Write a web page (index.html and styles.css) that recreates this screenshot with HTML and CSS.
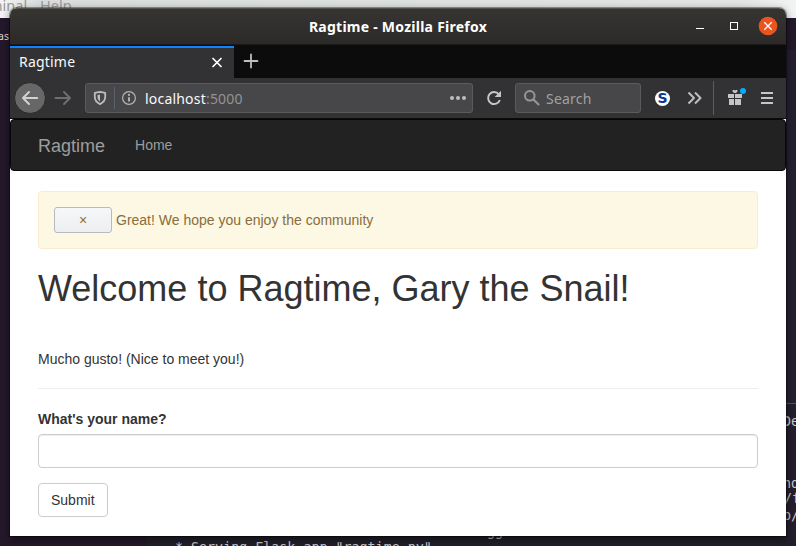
FILE: index.html
```html
<!DOCTYPE html>
<html lang="en">
<head>
<meta charset="utf-8">
<title>Ragtime</title>
<link rel="stylesheet" href="styles.css">
</head>
<body>
<div class="desktop">
  <div class="panel">
    <span class="bg-text menu-minal">minal</span>
    <span class="bg-text menu-help">Help</span>
  </div>
  <div class="terminal-right"></div>
  <div class="terminal-bottom"></div>
  <span class="bg-text term-as">as</span>
  <span class="bg-text mono de">De</span>
  <span class="bg-text mono nc">nd</span>
  <span class="bg-text mono sf">/f</span>
  <span class="bg-text mono pp">p/</span>
  <span class="bg-text mono gg">gg</span>
  <span class="bg-text mono serving">* Serving Flask app "ragtime.py"</span>

  <div class="window">
    <header class="titlebar">
      <span class="title">Ragtime - Mozilla Firefox</span>
      <div class="controls">
        <svg width="12" height="20" viewBox="0 0 12 20"><path d="M2 12.5h8" stroke="#fff"/></svg>
        <svg width="12" height="20" viewBox="0 0 12 20"><rect x="2.5" y="6.5" width="7" height="7" fill="none" stroke="#fff"/></svg>
        <svg width="20" height="20" viewBox="0 0 20 20"><circle cx="10" cy="10" r="9.3" fill="#e95420"/><path d="M6.3 6.3l7.4 7.4M13.7 6.3l-7.4 7.4" stroke="#fff" stroke-width="1.3"/></svg>
      </div>
    </header>
    <div class="tabs">
      <div class="tab">
        <span class="tab-name">Ragtime</span>
        <svg width="12" height="12" viewBox="0 0 12 12"><path d="M2 1.500l8 8M10 1.500l-8 8" stroke="#fff" stroke-width="1.7" stroke-linecap="round"/></svg>
      </div>
      <svg class="new-tab" width="16" height="16" viewBox="0 0 16 16"><path d="M8 1.5v13M1.5 8h13" stroke="#bebebf" stroke-width="1.8" stroke-linecap="round"/></svg>
    </div>
    <div class="toolbar">
      <div class="back">
        <svg width="18" height="16" viewBox="0 0 18 16"><path d="M16.2 8H2M8 2L2 8l6 6" fill="none" stroke="#d1d1d1" stroke-width="2" stroke-linecap="round" stroke-linejoin="round"/></svg>
      </div>
      <svg class="forward" width="18" height="16" viewBox="0 0 18 16"><path d="M1.5 8H16M10 2l6 6-6 6" fill="none" stroke="#6e6e70" stroke-width="2" stroke-linecap="round" stroke-linejoin="round"/></svg>
      <div class="url">
        <svg width="14" height="16" viewBox="0 0 14 16"><path d="M7 1.8l5.2 1.1v4.2c0 3.2-2 5.5-5.2 7-3.200-1.500-5.200-3.800-5.200-7V2.900z" fill="none" stroke="#bdbdbe" stroke-width="1.800" stroke-linejoin="round"/><path d="M7 4.500v7C5.300 10.300 4.500 9 4.500 7V5z" fill="#bdbdbe"/></svg>
        <span class="url-split"></span>
        <svg width="16" height="16" viewBox="0 0 16 16"><circle cx="8" cy="8" r="6.400" fill="none" stroke="#b5b5b6" stroke-width="1.200"/><path d="M8 7.200v4.300" stroke="#b5b5b6" stroke-width="1.900"/><circle cx="8" cy="4.900" r="1.100" fill="#b5b5b6"/></svg>
        <span class="address">localhost<span class="port">:5000</span></span>
        <svg class="dots" width="18" height="6" viewBox="0 0 18 6"><g fill="#bdbdbe"><circle cx="3" cy="3" r="2"/><circle cx="9" cy="3" r="2"/><circle cx="15" cy="3" r="2"/></g></svg>
      </div>
      <svg class="reload" width="18" height="18" viewBox="0 0 18 18"><path d="M13.800 5.300A6 6 0 1 0 14.800 11" fill="none" stroke="#c6c6c7" stroke-width="2"/><path d="M16 1.700v6.300H9.700z" fill="#c6c6c7"/></svg>
      <div class="search">
        <svg width="18" height="18" viewBox="0 0 18 18"><circle cx="6.800" cy="6.800" r="4.800" fill="none" stroke="#969697" stroke-width="2"/><path d="M10.500 10.500l5 5" stroke="#969697" stroke-width="2.100" stroke-linecap="round"/></svg>
        <span class="search-text">Search</span>
      </div>
      <div class="extension">S</div>
      <svg class="more" width="16" height="14" viewBox="0 0 16 14"><path d="M1.500 1.500L7 7l-5.500 5.500M8 1.500L13.500 7 8 12.500" fill="none" stroke="#bebebf" stroke-width="2" stroke-linejoin="round"/></svg>
      <div class="toolbar-split"></div>
      <svg class="gift" width="20" height="20" viewBox="0 0 20 20"><path d="M1 7h6v4H1zM8 7h7v4H8zM2 12h5v6H2zM8 12h6v6H8zM5.300 3.500l1.500-.8L8 3.500l1.200-.8 1.500.8L10 5.300 8.800 6H7.200L6 5.300z" fill="#c4c4c5"/><circle cx="16" cy="4" r="3" fill="#00adff"/></svg>
      <svg class="menu" width="14" height="14" viewBox="0 0 14 14"><path d="M1 2h12M1 7h12M1 12h12" stroke="#c6c6c7" stroke-width="2"/></svg>
    </div>
    <main class="page">
      <nav class="navbar"><span class="brand">Ragtime</span><span class="home">Home</span></nav>
      <div class="content">
        <div class="alert"><button class="dismiss">×</button><span>Great! We hope you enjoy the community</span></div>
        <h1>Welcome to Ragtime, Gary the Snail!</h1>
        <p class="greeting">Mucho gusto! (Nice to meet you!)</p>
        <form>
          <label for="name">What's your name?</label>
          <input id="name" type="text">
          <button type="button" class="submit">Submit</button>
        </form>
      </div>
    </main>
  </div>
</div>
</body>
</html>
```
FILE: styles.css
```css
* { box-sizing: border-box; }
body { margin: 0; font: 14px/20px "Liberation Sans", Arial, sans-serif; color: #333; }
svg { display: block; flex: none; }
.desktop { position: relative; width: 796px; height: 546px; overflow: hidden; background: #24182b; }
.panel { height: 18px; background: linear-gradient(90deg, #f4f4f4, #d9dcdc 40px, #e2e4e4 740px, #f2f3f3); }
.bg-text { position: absolute; white-space: pre; }
.menu-minal, .menu-help { top: -5px; font: 14.500px/20px "Noto Sans", sans-serif; color: #999; }
.menu-minal { left: -11px; }
.menu-help { left: 40px; }
.terminal-right { position: absolute; left: 786px; top: 50px; width: 10px; height: 496px; background: linear-gradient(#252031 353px, #54545f 353px, #54545f 354px, #241e2e 354px); }
.terminal-bottom { position: absolute; left: 147px; top: 536px; width: 649px; height: 10px; background: #221e2b; }
.term-as { left: -2px; top: 29px; font: 10.500px/14px "Noto Sans", sans-serif; color: #ddd; }
.mono { font: 13.330px/16px "DejaVu Sans Mono", monospace; color: #c9c9cf; }
.de { left: 783px; top: 414px; }
.nc { left: 783px; top: 476px; }
.sf { left: 784px; top: 491px; }
.pp { left: 783px; top: 508px; }
.gg { left: 487px; top: 524px; }
.serving { left: 175px; top: 540px; }
.window { position: absolute; left: 10px; top: 8px; width: 776px; height: 528px; display: flex; flex-direction: column; border-radius: 7px 7px 0 0; overflow: hidden; background: #fff; }
.desktop .window { box-shadow: 0 0 0 1px rgba(0,0,0,.35), 0 3px 9px rgba(0,0,0,.55); }
.titlebar { position: relative; height: 37px; display: flex; align-items: center; justify-content: center; background: linear-gradient(#373532, #2c2a29); border-top: 1px solid #53514e; border-bottom: 1px solid #1c1b1b; color: #fff; }
.title { font: bold 14px/20px "Noto Sans", sans-serif; letter-spacing: .25px; }
.controls { position: absolute; right: 8px; top: 7px; display: flex; gap: 22px; align-items: center; }
.controls svg:last-child { margin-left: -4px; }
.tabs { height: 33px; display: flex; background: #0c0c0d; }
.tab { width: 224px; height: 32px; border-top: 2px solid #0a84ff; margin-top: 1px; padding: 0 11px 0 9px; display: flex; align-items: center; justify-content: space-between; background: #323234; color: #f9f9fa; }
.tab-name, .address, .search { font: 14px/20px "Noto Sans", sans-serif; letter-spacing: .2px; }
.tab-name { padding-bottom: 2px; }
.new-tab { margin: 8px 0 0 9px; }
.toolbar { height: 41px; padding: 0 12px 0 4px; display: flex; align-items: center; background: #323234; border-bottom: 1px solid #0c0c0d; }
.back { width: 32px; height: 32px; border-radius: 50%; border: 1px solid #29292a; background: #676768; display: flex; align-items: center; justify-content: center; }
.forward { margin-left: 8px; }
.url { width: 388px; height: 30px; margin-left: 13px; padding: 0 5px 0 7px; border: 1px solid #5b5b5d; border-radius: 3px; background: #474749; display: flex; align-items: center; }
.url-split { width: 1px; height: 22px; margin: 0 6px 0 7px; background: #5b616c; }
.address { margin-left: 8px; padding-top: 1px; color: #f9f9fa; }
.port { color: #939395; }
.dots { margin-left: auto; }
.reload { margin-left: 12px; }
.search { width: 126px; height: 30px; margin-left: 12px; padding-left: 7px; border: 1px solid #5b5b5d; border-radius: 3px; background: #474749; color: #a1a1a2; display: flex; gap: 5px; align-items: center; }
.search-text { padding-top: 1px; }
.extension { width: 15px; height: 15px; margin-left: 14px; border-radius: 50%; background: #fff; color: #063a96; font: bold 14px/15px "DejaVu Sans", sans-serif; text-align: center; }
.more { margin-left: 17px; }
.toolbar-split { width: 1px; height: 34px; margin-left: 10px; background: #5d5d5f; }
.gift { margin-left: 13px; margin-top: -3px; }
.menu { margin-left: auto; }
.page { flex: 1; background: #fff; }
.navbar { height: 52px; border: 1px solid #080808; border-radius: 4px; background: #222; display: flex; align-items: center; padding-left: 27px; color: #9d9d9d; }
.brand { font-size: 18px; margin-right: 30px; padding-top: 1px; }
.content { padding: 20px 28px 0; }
.alert { height: 58px; padding: 0 15px; display: flex; align-items: center; gap: 4px; border: 1px solid #faebcc; border-radius: 4px; background: #fcf8e3; color: #8a6d3b; }
.dismiss { width: 58px; height: 26px; padding: 0; border: 1px solid #b6bbc1; border-radius: 3px; background: linear-gradient(#f6f7f8, #eceef0); color: #8a6d3b; font: 14px/20px "Liberation Sans", sans-serif; }
h1 { margin: 20px 0 0; font-size: 36px; font-weight: 500; line-height: 39.600px; }
.greeting { margin: 40px 0 0; padding-bottom: 19px; border-bottom: 1px solid #eee; }
form { margin: 20px 0 0; display: flex; flex-direction: column; align-items: flex-start; }
label { font-weight: bold; margin-bottom: 5px; }
input { width: 100%; height: 34px; padding: 6px 12px; border: 1px solid #ccc; border-radius: 4px; box-shadow: inset 0 1px 1px rgba(0,0,0,.075); }
.submit { height: 34px; margin-top: 15px; padding: 6px 12px; border: 1px solid #ccc; border-radius: 4px; background: #fff; color: #333; font: 14px/20px "Liberation Sans", sans-serif; }
```
